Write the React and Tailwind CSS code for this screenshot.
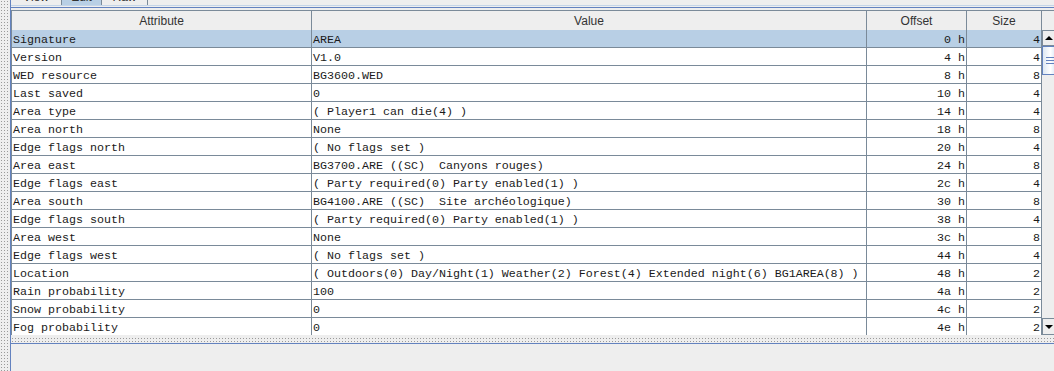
const rows = [
  ['Signature', 'AREA', '0 h', '4'],
  ['Version', 'V1.0', '4 h', '4'],
  ['WED resource', 'BG3600.WED', '8 h', '8'],
  ['Last saved', '0', '10 h', '4'],
  ['Area type', '( Player1 can die(4) )', '14 h', '4'],
  ['Area north', 'None', '18 h', '8'],
  ['Edge flags north', '( No flags set )', '20 h', '4'],
  ['Area east', 'BG3700.ARE ((SC)  Canyons rouges)', '24 h', '8'],
  ['Edge flags east', '( Party required(0) Party enabled(1) )', '2c h', '4'],
  ['Area south', 'BG4100.ARE ((SC)  Site archéologique)', '30 h', '8'],
  ['Edge flags south', '( Party required(0) Party enabled(1) )', '38 h', '4'],
  ['Area west', 'None', '3c h', '8'],
  ['Edge flags west', '( No flags set )', '44 h', '4'],
  ['Location', '( Outdoors(0) Day/Night(1) Weather(2) Forest(4) Extended night(6) BG1AREA(8) )', '48 h', '2'],
  ['Rain probability', '100', '4a h', '2'],
  ['Snow probability', '0', '4c h', '2'],
  ['Fog probability', '0', '4e h', '2'],
]

const dots = 'bg-[radial-gradient(circle,#9a9a9a_0.8px,transparent_1px)] bg-[length:3px_3px]'

function Tab({ label, selected, width }) {
  return (
    <div className={`${width} h-[5px] overflow-hidden border-r border-[#7a8a99] ${selected ? 'bg-[#b8cfe5]' : 'bg-[#eeeeee]'}`}>
      <div className="-mt-[11px] h-[16px] leading-[16px] text-center text-[12px] text-[#333333]">{label}</div>
    </div>
  )
}

function Row({ row, selected }) {
  const cell = `h-[18px] border-r border-b border-[#7a8a99] leading-[21px] whitespace-pre overflow-hidden ${selected ? 'bg-[#b8cfe5]' : 'bg-white'}`
  return (
    <div className="grid grid-cols-[300px_555px_100px_75px] font-['Liberation_Mono',monospace] text-[11.67px] text-[#1a1a1a]">
      <div className={`${cell} pl-px`}>{row[0]}</div>
      <div className={`${cell} pl-px`}>{row[1]}</div>
      <div className={`${cell} text-right pr-px`}>{row[2]}</div>
      <div className={`${cell} text-right pr-px`}>{row[3]}</div>
    </div>
  )
}

function Scrollbar() {
  return (
    <div className="w-[17px] shrink-0 h-full flex flex-col bg-[#eeeeee]">
      <div className="h-[16px] shrink-0 border border-[#7a8a99] bg-[#eeeeee] flex items-center justify-center pr-[4px]">
        <div className="w-0 h-0 border-x-[4px] border-x-transparent border-b-[4px] border-b-black" />
      </div>
      <div className="h-[29px] shrink-0 border border-[#6382bf] bg-gradient-to-r from-[#dde8f3] via-white to-[#c8ddf2] flex flex-col items-start justify-center gap-[2px] pl-[3px]">
        <div className="w-[8px] h-px bg-[#6382bf]" />
        <div className="w-[8px] h-px bg-[#6382bf]" />
        <div className="w-[8px] h-px bg-[#6382bf]" />
      </div>
      <div className="flex-1" />
      <div className="h-[17px] shrink-0 border border-[#7a8a99] bg-[#eeeeee] flex items-center justify-center pr-[4px]">
        <div className="w-0 h-0 border-x-[4px] border-x-transparent border-t-[4px] border-t-black" />
      </div>
    </div>
  )
}

export default function App() {
  return (
    <div className="w-[1054px] h-[371px] overflow-hidden flex bg-[#eeeeee] font-['Liberation_Sans',Arial,sans-serif]">
      <div className={`w-[10px] h-full shrink-0 ${dots}`} />
      <div className="flex-1 min-w-0 flex flex-col border-l border-[#6382bf]">
        <div className="h-[5px] flex">
          <Tab label="View" width="w-[51px]" />
          <Tab label="Edit" width="w-[40px]" selected />
          <Tab label="Raw" width="w-[46px]" />
        </div>
        <div className="h-px bg-[#c4d5e8]" />
        <div className="h-px bg-[#eeeeee]" />
        <div className="h-px bg-[#6382bf]" />
        <div className="h-[2px]" />
        <div className="h-[325px] flex flex-col border-l border-[#7a8a99] overflow-hidden">
          <div className="h-[20px] shrink-0 flex border-t border-[#7a8a99] bg-[#eeeeee] text-[12px] text-[#333333]">
            <div className="w-[300px] border-r border-[#7a8a99] text-center leading-[21px]">Attribute</div>
            <div className="w-[555px] border-r border-[#7a8a99] text-center leading-[21px]">Value</div>
            <div className="w-[100px] border-r border-[#7a8a99] text-center leading-[21px]">Offset</div>
            <div className="w-[75px] border-r border-[#7a8a99] text-center leading-[21px]">Size</div>
            <div className="flex-1" />
          </div>
          <div className="flex-1 flex overflow-hidden">
            <div className="w-[1030px] shrink-0">
              {rows.map((r, i) => (
                <Row key={r[0]} row={r} selected={i === 0} />
              ))}
            </div>
            <Scrollbar />
          </div>
        </div>
        <div className="h-[2px]" />
        <div className={`h-[5px] ${dots}`} />
        <div className="h-px" />
        <div className="h-px bg-[#6382bf]" />
        <div className="flex-1" />
      </div>
    </div>
  )
}
